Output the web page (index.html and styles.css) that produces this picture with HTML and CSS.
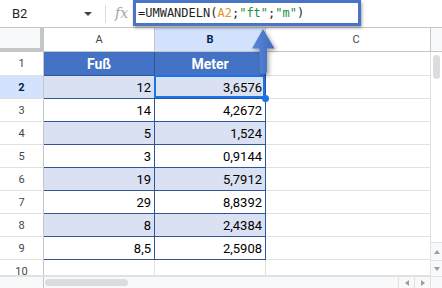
FILE: index.html
```html
<!DOCTYPE html>
<html lang="de">
  <head>
    <meta charset="UTF-8" />
    <title>UMWANDELN Fuß in Meter</title>
    <link rel="stylesheet" href="styles.css">
  </head>
  <body>
    <div class="formula-bar">
      <div class="name-box"><span>B2</span><span class="caret"></span></div>
      <div class="divider"></div>
      <div class="fx">fx</div>
      <div class="formula-input">=UMWANDELN(<span class="ref">A2</span>;<span class="str">"ft"</span>;<span class="str">"m"</span>)</div>
    </div>

    <div class="sheet">
      <div class="corner"></div>
      <div class="col-head">A</div>
      <div class="col-head active">B</div>
      <div class="col-head wide">C</div>
      <div class="col-head edge"></div>

      <div class="vscroll">
        <div class="thumb-v"></div>
        <div class="spacer"></div>
        <div class="btn-v up"><span class="tri-up"></span></div>
        <div class="btn-v down"><span class="tri-down"></span></div>
      </div>

      <div class="row-head">1</div>
      <div class="cell data title">Fuß</div>
      <div class="cell data title">Meter</div>
      <div class="cell"></div>

      <div class="row-head active">2</div>
      <div class="cell data band">12</div>
      <div class="cell data band selected">3,6576<span class="sel-box"></span><span class="handle"></span></div>
      <div class="cell"></div>

      <div class="row-head">3</div>
      <div class="cell data">14</div>
      <div class="cell data">4,2672</div>
      <div class="cell"></div>

      <div class="row-head">4</div>
      <div class="cell data band">5</div>
      <div class="cell data band">1,524</div>
      <div class="cell"></div>

      <div class="row-head">5</div>
      <div class="cell data">3</div>
      <div class="cell data">0,9144</div>
      <div class="cell"></div>

      <div class="row-head">6</div>
      <div class="cell data band">19</div>
      <div class="cell data band">5,7912</div>
      <div class="cell"></div>

      <div class="row-head">7</div>
      <div class="cell data">29</div>
      <div class="cell data">8,8392</div>
      <div class="cell"></div>

      <div class="row-head">8</div>
      <div class="cell data band">8</div>
      <div class="cell data band">2,4384</div>
      <div class="cell"></div>

      <div class="row-head">9</div>
      <div class="cell data">8,5</div>
      <div class="cell data">2,5908</div>
      <div class="cell"></div>

      <div class="row-head cut">10</div>
      <div class="cell"></div>
      <div class="cell"></div>
      <div class="cell"></div>

      <div class="hscroll">
        <div class="hs-head"></div>
        <div class="hs-track"><div class="thumb-h"></div></div>
        <div class="btn-h"><span class="tri-left"></span></div>
        <div class="btn-h"><span class="tri-right"></span></div>
        <div class="hs-corner"></div>
      </div>
    </div>

    <svg class="arrow" width="442" height="288" viewBox="0 0 442 288">
      <defs>
        <linearGradient id="arrowFill" x1="0" y1="0" x2="1" y2="0">
          <stop offset="0" stop-color="#5b87d7" />
          <stop offset="1" stop-color="#3f6cbf" />
        </linearGradient>
      </defs>
      <path d="M263 29 L274.5 48.5 L267 48.5 L267 71 Q267 74 263 74 Q259.5 74 259.5 71 L259.5 48.5 L252 48.5 Z" fill="url(#arrowFill)" />
    </svg>
  </body>
</html>
```

FILE: styles.css
```css
body {
  margin: 0;
  width: 442px;
  height: 288px;
  overflow: hidden;
  position: relative;
  background-color: #ffffff;
  font-family: Roboto, "Liberation Sans", Arial, sans-serif;
  color: #1f1f1f;
}

/* formula bar */

.formula-bar {
  display: flex;
  align-items: flex-start;
  height: 28px;
  box-sizing: border-box;
  border-bottom: 1px solid #c7c7c7;
}

.name-box {
  width: 100px;
  height: 27px;
  box-sizing: border-box;
  padding-left: 12px;
  display: flex;
  align-items: center;
  font-size: 13px;
}

.caret {
  margin-left: auto;
  margin-right: 8px;
  border-left: 4px solid transparent;
  border-right: 4px solid transparent;
  border-top: 4px solid #444746;
}

.divider {
  width: 1px;
  height: 18px;
  background-color: #dadce0;
  margin: 5px 9px 0 5px;
}

.fx {
  width: 18px;
  line-height: 27px;
  font-family: "DejaVu Serif", serif;
  font-style: italic;
  font-size: 14px;
  color: #a0a4a8;
}

.formula-input {
  width: 228px;
  height: 26px;
  box-sizing: border-box;
  border: 3px solid #4a74c6;
  box-shadow: 1px 2px 3px rgba(0, 0, 0, 0.35);
  padding-left: 2px;
  font-family: "DejaVu Sans Mono", monospace;
  font-size: 12px;
  line-height: 20px;
  white-space: nowrap;
  background-color: #ffffff;
  position: relative;
}

.ref {
  color: #e8912d;
}

.str {
  color: #1e8e3e;
}

/* grid */

.sheet {
  display: grid;
  grid-template-columns: 44px 111px 111px 165px 11px;
  grid-template-rows: 24px 24px repeat(8, 23px) 16px 12px;
}

.sheet > div {
  box-sizing: border-box;
}

.corner {
  background-color: #f8f9fa;
  border-right: 4px solid #c4c7c5;
  border-bottom: 4px solid #c4c7c5;
}

.col-head {
  display: flex;
  align-items: center;
  justify-content: center;
  font-size: 11px;
  color: #444746;
  background-color: #ffffff;
  border-right: 1px solid #c4c7c5;
  border-bottom: 1px solid #c4c7c5;
}

.col-head.active {
  background-color: #d3e3fd;
  color: #041e49;
  font-weight: bold;
}

.col-head.wide {
  padding-left: 16px;
}

.col-head.edge {
  background-color: #f8f9fa;
  border-right: none;
}

.row-head {
  display: flex;
  align-items: center;
  justify-content: center;
  font-size: 11px;
  color: #444746;
  border-right: 1px solid #c4c7c5;
  border-bottom: 1px solid #e1e1e1;
}

.row-head.active {
  background-color: #d3e3fd;
  color: #041e49;
  font-weight: bold;
}

.row-head.cut {
  align-items: flex-start;
  line-height: 23px;
  overflow: hidden;
}

.cell {
  border-right: 1px solid #e1e1e1;
  border-bottom: 1px solid #e1e1e1;
}

.data {
  display: flex;
  align-items: center;
  justify-content: flex-end;
  padding-right: 3px;
  font-size: 13px;
  color: #000000;
  border-right-color: #2f5597;
  border-bottom-color: #2f5597;
}

.band {
  background-color: #d9e1f2;
}

.title {
  justify-content: center;
  padding-right: 0;
  background-color: #4472c4;
  color: #ffffff;
  font-weight: bold;
  font-size: 14px;
}

.selected {
  position: relative;
}

.sel-box {
  position: absolute;
  top: -1px;
  left: -1px;
  right: 0;
  bottom: 0;
  border: 2px solid #1a73e8;
}

.handle {
  position: absolute;
  right: -4px;
  bottom: -4px;
  width: 7px;
  height: 7px;
  border-radius: 50%;
  background-color: #1a73e8;
}

/* scrollbars */

.vscroll {
  grid-column: 5;
  grid-row: 2 / 12;
  display: flex;
  flex-direction: column;
  background-color: #ffffff;
}

.thumb-v {
  margin: 3px 2px 0 2px;
  height: 24px;
  border-radius: 4px;
  background-color: #dadce0;
}

.spacer {
  flex: 1;
}

.btn-v {
  display: flex;
  align-items: center;
  justify-content: center;
  background-color: #f8f9fa;
  border-top: 1px solid #e1e1e1;
}

.btn-v.up {
  height: 17px;
}

.btn-v.down {
  height: 15px;
}

.tri-up {
  border-left: 3px solid transparent;
  border-right: 3px solid transparent;
  border-bottom: 4px solid #9e9e9e;
}

.tri-down {
  border-left: 3px solid transparent;
  border-right: 3px solid transparent;
  border-top: 4px solid #9e9e9e;
}

.hscroll {
  grid-column: 1 / -1;
  display: flex;
  background-color: #f8f9fa;
  border-top: 1px solid #e1e1e1;
}

.hs-head {
  width: 44px;
  border-right: 1px solid #c4c7c5;
  box-sizing: border-box;
}

.hs-track {
  flex: 1;
  padding: 2px 0 0 1px;
}

.thumb-h {
  width: 83px;
  height: 7px;
  border-radius: 4px;
  background-color: #dadce0;
}

.btn-h {
  width: 16px;
  box-sizing: border-box;
  border-left: 1px solid #e1e1e1;
  display: flex;
  align-items: center;
  justify-content: center;
}

.tri-left {
  border-top: 3px solid transparent;
  border-bottom: 3px solid transparent;
  border-right: 4px solid #9e9e9e;
}

.tri-right {
  border-top: 3px solid transparent;
  border-bottom: 3px solid transparent;
  border-left: 4px solid #9e9e9e;
}

.hs-corner {
  width: 12px;
  box-sizing: border-box;
  border-left: 1px solid #e1e1e1;
}

/* callout arrow */

.arrow {
  position: absolute;
  top: 0;
  left: 0;
  pointer-events: none;
  filter: drop-shadow(2px 2px 2px rgba(0, 0, 0, 0.35));
}
```
